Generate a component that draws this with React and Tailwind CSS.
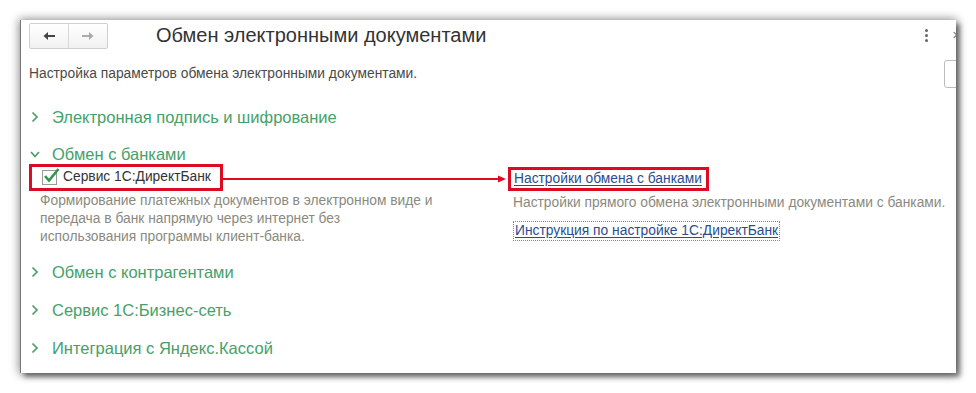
import React from 'react';

const sections = ['Обмен с контрагентами', 'Сервис 1С:Бизнес-сеть', 'Интеграция с Яндекс.Кассой'];

function Chevron({ down }) {
  return (
    <svg width="10" height="12" viewBox="0 0 10 12" className="shrink-0">
      {down ? (
        <path d="M1 4 L5 8.5 L9 4" fill="none" stroke="#4a9e68" strokeWidth="1.7" />
      ) : (
        <path d="M2.5 1.5 L7 6 L2.5 10.5" fill="none" stroke="#4a9e68" strokeWidth="1.7" />
      )}
    </svg>
  );
}

function Section({ title, down }) {
  return (
    <div className="flex items-center h-[38px] pl-[9px] gap-[12px] text-[16.5px] text-[#45a169]">
      <Chevron down={down} />
      <span>{title}</span>
    </div>
  );
}

export default function App() {
  return (
    <div className="w-[976px] h-[393px] bg-white pt-[20px] pl-[20px] font-['Liberation_Sans',Arial,sans-serif]">
      <div className="relative w-[936px] h-[353px] bg-white overflow-hidden shadow-[0_0_9px_1px_rgba(0,0,0,0.45),4px_4px_5px_rgba(0,0,0,0.45)] border-l border-[#777]">
        {/* header */}
        <div className="flex items-center h-[30px] pl-[8px]">
          <div className="flex h-[26px] mt-[1px] border border-[#cfcfcf] rounded-[2px] bg-gradient-to-b from-white to-[#f1f1f1]">
            <div className="w-[39px] flex items-center justify-center border-r border-[#d8d8d8]">
              <svg width="14" height="10" viewBox="0 0 14 10">
                <path d="M13 5 H3" stroke="#444" strokeWidth="2" />
                <path d="M6 1 L1.5 5 L6 9 Z" fill="#444" />
              </svg>
            </div>
            <div className="w-[38px] flex items-center justify-center">
              <svg width="14" height="10" viewBox="0 0 14 10">
                <path d="M1 5 H11" stroke="#aaa" strokeWidth="2" />
                <path d="M8 1 L12.5 5 L8 9 Z" fill="#aaa" />
              </svg>
            </div>
          </div>
          <div className="ml-[48px] text-[20px] text-[#333]">Обмен электронными документами</div>
          <div className="ml-auto flex items-center">
            <div className="flex flex-col gap-[2px] mr-[24px]">
              <span className="w-[3px] h-[3px] rounded-full bg-[#666]" />
              <span className="w-[3px] h-[3px] rounded-full bg-[#666]" />
              <span className="w-[3px] h-[3px] rounded-full bg-[#666]" />
            </div>
            <span className="text-[15px] text-[#777] -mr-[5px]">×</span>
          </div>
        </div>
        <div className="absolute right-[-6px] top-[40px] w-[18px] h-[28px] border border-[#bbb] rounded-[3px] bg-white" />

        <div className="pl-[8px] mt-[15px] text-[13.8px] leading-[18px] text-[#4a4a4a]">
          Настройка параметров обмена электронными документами.
        </div>

        <div className="mt-[15px]">
          <Section title="Электронная подпись и шифрование" />
        </div>
        <div className="flex items-center h-[28px] pt-[8px] pl-[9px] gap-[12px] text-[16.5px] text-[#45a169]">
          <Chevron down />
          <span>Обмен с банками</span>
        </div>

        {/* annotated row */}
        <div className="flex items-end pl-[8px]">
          <div className="flex items-center h-[27px] w-[194px] border-[3px] border-[#dc0a22] pl-[10px] gap-[6px]">
            <div className="relative w-[15px] h-[15px] border border-[#9a9a9a] bg-white">
              <svg width="18" height="18" viewBox="0 0 18 18" className="absolute -top-[5px] left-0">
                <path d="M2 10 L6 14.5 L15.5 3" fill="none" stroke="#2f9a4c" strokeWidth="2.6" />
              </svg>
            </div>
            <span className="text-[13.8px] text-[#333]">Сервис 1С:ДиректБанк</span>
          </div>
          <div className="flex-1 h-[24px] flex items-center">
            <div className="flex-1 h-[2px] bg-[#dc0a22]" />
            <svg width="8" height="8" viewBox="0 0 8 8" className="-ml-[1px]">
              <path d="M0 0.5 L8 4 L0 7.5 Z" fill="#dc0a22" />
            </svg>
            <div className="w-[2px]" />
          </div>
          <div className="flex items-center h-[24px] w-[201px] border-[3px] border-[#dc0a22] pl-[3px] mr-[247px]">
            <span className="text-[13.8px] text-[#2a4d8f] underline underline-offset-2 whitespace-nowrap">Настройки обмена с банками</span>
          </div>
        </div>

        <div className="flex">
          <div className="w-[488px] pl-[19px] text-[13.8px] leading-[18px] text-[#8a8a7e] mt-[1px]">
            <div>Формирование платежных документов в электронном виде и</div>
            <div>передача в банк напрямую через интернет без</div>
            <div>использования программы клиент-банка.</div>
          </div>
          <div className="pl-[4px] text-[13.8px] leading-[18px]">
            <div className="mt-[3px] text-[#8a8a7e] whitespace-nowrap">Настройки прямого обмена электронными документами с банками.</div>
            <div className="mt-[9px] inline-block border border-dotted border-[#888] px-[1px] text-[#2a4d8f] underline underline-offset-2">
              Инструкция по настройке 1С:ДиректБанк
            </div>
          </div>
        </div>

        <div className="mt-[7px]">
          {sections.map((s) => (
            <Section key={s} title={s} />
          ))}
        </div>
      </div>
    </div>
  );
}
